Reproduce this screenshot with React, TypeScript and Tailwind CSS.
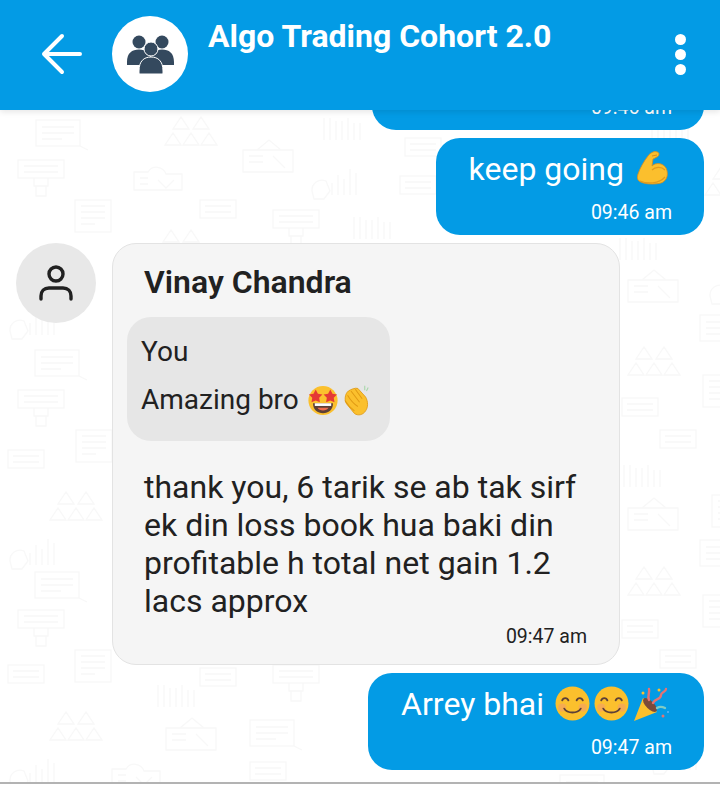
import type { ReactNode } from "react";

const font = "font-['Roboto',sans-serif]";

// faint doodles behind the chat
const doodles: [string, number, number][] = [
  ["board", 36, 120], ["people", 165, 115], ["house", 243, 140], ["bars", 322, 118],
  ["screen", 18, 160], ["cloud", 132, 158], ["chart", 310, 165], ["doc", 75, 200],
  ["small", 200, 200], ["screen", 273, 210], ["bars", 352, 217], ["people", 155, 228],
  ["small", 405, 138], ["small", 400, 176], ["chart", 8, 305], ["board", 35, 350],
  ["screen", 18, 390], ["doc", 76, 430], ["small", 8, 450], ["people", 50, 490],
  ["chart", 8, 535], ["board", 35, 572], ["screen", 18, 610], ["doc", 75, 650],
  ["small", 8, 665], ["bars", 156, 685], ["small", 200, 668], ["screen", 273, 665],
  ["people", 50, 710], ["house", 166, 718], ["board", 250, 720], ["chart", 8, 755],
  ["cloud", 110, 755], ["small", 250, 762], ["bars", 618, 238], ["house", 628, 270],
  ["chart", 708, 270], ["board", 700, 315], ["people", 628, 345], ["doc", 703, 375],
  ["small", 622, 398], ["small", 660, 430], ["bars", 622, 465], ["house", 628, 498],
  ["doc", 712, 495], ["board", 700, 540], ["people", 628, 565], ["doc", 703, 595],
  ["small", 622, 620], ["small", 660, 650], ["bars", 650, 118], ["chart", 650, 740],
  ["board", 560, 775], ["people", 705, 165],
];

function Doodle({ kind, x, y }: { kind: string; x: number; y: number }) {
  return (
    <g transform={`translate(${x} ${y})`} fill="none" stroke="#f8f8f8" strokeWidth="1.3">
      {kind === "board" && (
        <>
          <rect x="0" y="0" width="44" height="26" />
          <path d="M6 7h32M6 13h32M6 19h20M44 26l8 4" />
        </>
      )}
      {kind === "small" && (
        <>
          <rect x="0" y="0" width="36" height="18" />
          <path d="M5 6h26M5 12h26" />
        </>
      )}
      {kind === "people" && (
        <path d="M8 14l8-12 8 12zM28 14l8-12 8 12zM0 30l8-12 8 12zM18 30l8-12 8 12zM36 30l8-12 8 12z" />
      )}
      {kind === "house" && (
        <path d="M0 10h50v22H0zM14 10L26 0l12 10M6 16h14M6 22h14M30 16l12 12" />
      )}
      {kind === "bars" && (
        <path d="M2 0v22M8 0v22M14 3v19M20 3v19M26 0v22M32 5v17M38 5v17" />
      )}
      {kind === "screen" && (
        <>
          <rect x="0" y="0" width="46" height="18" />
          <path d="M6 6h34M6 12h34M16 18v8h14v-8M18 26v10h10V26" />
        </>
      )}
      {kind === "cloud" && (
        <path d="M2 32V14h14a10 10 0 0 1 18 2h16v16zM8 20h8M8 26h8M26 22l8 8 8-8" />
      )}
      {kind === "chart" && (
        <path d="M2 26a10 10 0 0 1 14-10l4 10-6 8H4zM22 30V18M28 30V10M34 30V14M40 30V4M46 30V8" />
      )}
      {kind === "doc" && (
        <>
          <rect x="0" y="0" width="36" height="32" />
          <path d="M6 6h24M6 12h24M6 18h24M6 24h14" />
        </>
      )}
    </g>
  );
}

function BackArrow() {
  return (
    <svg viewBox="0 0 42 42" className="w-[42px] h-[42px]" fill="none" stroke="#fff" strokeWidth="4" strokeLinecap="round" strokeLinejoin="round">
      <path d="M39 21H3M21 3L3 21l18 18" />
    </svg>
  );
}

function GroupIcon() {
  return (
    <svg viewBox="0 0 47 39" className="w-[47px] h-[39px]" fill="#34495e">
      <circle cx="12" cy="7" r="6.5" />
      <circle cx="35" cy="7" r="6.5" />
      <path d="M0 27c0-9 5-12.500 12-12.500S24 18 24 27v3H0zM23 27c0-9 5-12.500 12-12.500S47 18 47 27v3H23z" />
      <circle cx="24" cy="14" r="7" stroke="#fff" strokeWidth="1" />
      <path
        d="M12 36c0-10 5-14 12-14s12 4 12 14v2c0 .6-.4 1-1 1H13c-.6 0-1-.4-1-1z"
        stroke="#fff"
        strokeWidth="1"
      />
    </svg>
  );
}

function PersonIcon() {
  return (
    <svg viewBox="0 0 34 38" className="w-[34px] h-[38px]" fill="none" stroke="#212121" strokeWidth="3.4" strokeLinecap="round">
      <circle cx="17" cy="10" r="7" />
      <path d="M2 35v-3c0-5 3-8 8-8h14c5 0 8 3 8 8v3" />
    </svg>
  );
}

function Muscle() {
  return (
    <svg viewBox="0 0 31 34" className="w-[31px] h-[34px] shrink-0">
      <path
        d="M16 1c3-1 6 0 6 2 0 3-3 3-4 4l-2 1-1 7c4-4 11-3 14 2 3 6 1 13-5 15-8 2-18 1-22-2-2-2-2-4-1-7C3 17 7 10 11 5c1-2 3-3 5-4z"
        fill="#fbbf2d"
        stroke="#d98e1a"
        strokeWidth="0.8"
      />
      <path d="M15 19c3-3 9-4 13 0M3 30c7 3 19 3 25-4" fill="none" stroke="#e39a1c" strokeWidth="1.2" />
      <path d="M15 5l5-1" fill="none" stroke="#d98e1a" strokeWidth="1" />
    </svg>
  );
}

function Smile() {
  return (
    <svg viewBox="0 0 34 34" className="w-[35px] h-[35px] shrink-0">
      <circle cx="17" cy="17" r="16.500" fill="#fbc02d" />
      <circle cx="7" cy="21" r="4" fill="#f4a261" opacity="0.7" />
      <circle cx="27" cy="21" r="4" fill="#f4a261" opacity="0.7" />
      <path d="M7 14c1-3 5-3 6 0M21 14c1-3 5-3 6 0M9 22c3 5 13 5 16 0" fill="none" stroke="#5d4037" strokeWidth="1.8" strokeLinecap="round" />
    </svg>
  );
}

function Party() {
  return (
    <svg viewBox="0 0 36 36" className="w-[36px] h-[36px] shrink-0">
      <path d="M1 35l9-23 14 14z" fill="#fbc02d" />
      <ellipse cx="17" cy="19" rx="4" ry="9" transform="rotate(-45 17 19)" fill="#7b4a3a" />
      <path d="M16 14c-2-4 1-7 0-11M20 17c2-5 8-3 8-8 0-3 5-3 5-6" fill="none" stroke="#e57373" strokeWidth="2.4" strokeLinecap="round" />
      <path d="M24 22c3-2 6-1 8 0" fill="none" stroke="#80cbc4" strokeWidth="2.4" strokeLinecap="round" />
      <circle cx="10" cy="7" r="1.500" fill="#fbc02d" />
      <circle cx="26" cy="4" r="1.500" fill="#fbc02d" />
      <circle cx="30" cy="30" r="1.500" fill="#e57373" />
      <circle cx="35" cy="26" r="1" fill="#64b5f6" />
    </svg>
  );
}

function StarEyes() {
  return (
    <svg viewBox="0 0 34 34" className="w-[32px] h-[31px] shrink-0">
      <circle cx="17" cy="17" r="16" fill="#fbc02d" />
      <path d="M6 20h22c0 7-5 11-11 11S6 27 6 20z" fill="#5d4037" />
      <path d="M8 20h18v3H8z" fill="#fff" />
      <path d="M11 25h12c-2 4-10 4-12 0z" fill="#ef6c4d" />
      <path d="M9 5l2.400 4.600 5 .8-3.600 3.600.8 5L9 17l-4.600 2 .8-5-3.600-3.600 5-.8zM25 5l2.400 4.600 5 .8-3.600 3.600.8 5L25 17l-4.600 2 .8-5-3.600-3.600 5-.8z" fill="#e53935" />
    </svg>
  );
}

function Clap() {
  return (
    <svg viewBox="0 0 30 36" className="w-[28px] h-[31px] shrink-0">
      <path d="M5 7c3-2 8-4 11-3l9 10c3 5 3 12 0 16-3 5-9 6-13 3L3 22C0 18 1 10 5 7z" fill="#fbc02d" stroke="#e09a14" strokeWidth="1" />
      <path d="M4 12c3 5 7 10 12 13M8 7l10 13M13 5l8 11M1 18c3 5 7 9 11 12" fill="none" stroke="#e09a14" strokeWidth="1.2" />
      <path d="M24 1v5M28 3l-2 4" fill="none" stroke="#a5d6a7" strokeWidth="1.2" />
    </svg>
  );
}

function SentBubble({ children, time, className }: { children?: ReactNode; time: string; className: string }) {
  return (
    <div className={`self-end bg-[#039be5] rounded-[24px] h-[97px] pr-[32px] flex flex-col items-end text-white ${className}`}>
      <div className="h-[61px] flex items-center text-[32px] leading-[38px] whitespace-nowrap">{children}</div>
      <div className="text-[19.5px] leading-[24px] mt-[2px]">{time}</div>
    </div>
  );
}

export default function App() {
  return (
    <div className={`${font} relative w-[720px] h-[791px] overflow-hidden bg-white`}>
      <svg className="absolute left-0 top-0 w-[720px] h-[782px]" viewBox="0 0 720 782">
        {doodles.map(([kind, x, y], i) => (
          <Doodle key={i} kind={kind} x={x} y={y} />
        ))}
      </svg>

      <header className="relative z-10 h-[110px] bg-[#039be5] shadow-[0_2px_6px_rgba(0,0,0,0.1)] flex items-start text-white">
        <div className="ml-[41px] mt-[33px] shrink-0">
          <BackArrow />
        </div>
        <div className="ml-[29px] mt-[16px] w-[76px] h-[76px] rounded-full bg-white flex items-center justify-center shrink-0">
          <GroupIcon />
        </div>
        <h1 className="ml-[20px] mt-[17px] text-[32px] leading-[38px] font-bold whitespace-nowrap">Algo Trading Cohort 2.0</h1>
        <div className="ml-auto mr-[34px] mt-[34px] flex flex-col gap-[4px]">
          <span className="w-[11px] h-[11px] rounded-full bg-white" />
          <span className="w-[11px] h-[11px] rounded-full bg-white" />
          <span className="w-[11px] h-[11px] rounded-full bg-white" />
        </div>
      </header>

      <main className="relative flex flex-col gap-2 px-4">
        <SentBubble time="09:46 am" className="w-[332px] -mt-[77px]" />
        <SentBubble time="09:46 am" className="w-[268px]">
          keep going
          <span className="ml-[13px] mr-[4px] -mt-[1px]">
            <Muscle />
          </span>
        </SentBubble>

        <div className="flex items-start gap-4">
          <div className="w-20 h-20 rounded-full bg-[#e8e8e8] flex items-center justify-center shrink-0">
            <PersonIcon />
          </div>
          <div className="w-[508px] h-[422px] bg-[#f5f5f5] border border-[#e3e3e3] rounded-[24px] pt-[18px] text-[#212121] flex flex-col">
            <div className="pl-[31px] text-[32px] leading-[40px] font-semibold">Vinay Chandra</div>
            <div className="ml-[14px] mt-[15px] w-[263px] h-[124px] bg-[#e6e6e6] rounded-[24px] pl-[14px] pt-[11px] text-[28px] leading-[48px]">
              <div>You</div>
              <div className="flex items-center whitespace-nowrap">
                Amazing bro
                <span className="ml-[8px]"><StarEyes /></span>
                <span className="ml-[4px]"><Clap /></span>
              </div>
            </div>
            <p className="pl-[31px] pr-[24px] mt-[27px] text-[32px] leading-[38px]">
              thank you, 6 tarik se ab tak sirf ek din loss book hua baki din profitable h total net gain 1.2 lacs approx
            </p>
            <div className="self-end pr-[32px] mt-[5px] text-[19.5px] leading-[24px]">09:47 am</div>
          </div>
        </div>

        <SentBubble time="09:47 am" className="w-[336px]">
          Arrey bhai
          <span className="ml-[11px] mr-[3px] flex items-center gap-[4px]">
            <Smile />
            <Smile />
            <Party />
          </span>
        </SentBubble>
      </main>

      <div className="absolute left-0 right-0 top-[782px] h-[2px] bg-[#b3b3b3]" />
      <div className="absolute left-0 right-0 top-[784px] h-[7px] bg-white" />
    </div>
  );
}
